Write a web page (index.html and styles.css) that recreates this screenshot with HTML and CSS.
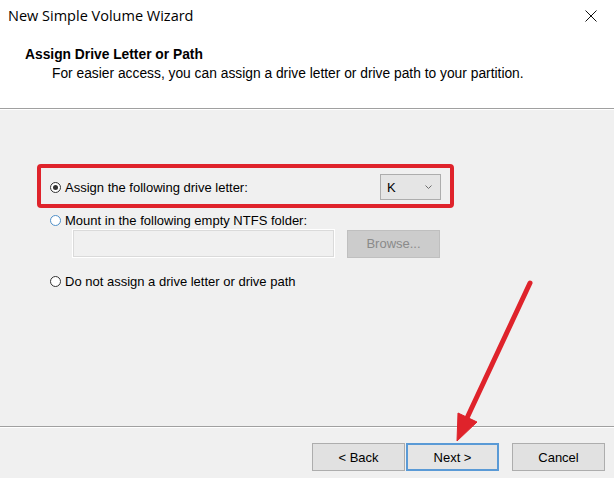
FILE: index.html
```html
<!DOCTYPE html>
<html lang="en">
<head>
    <meta charset="UTF-8">
    <title>New Simple Volume Wizard</title>
    <link rel="stylesheet" href="styles.css">
</head>
<body>
    <div class="window">
        <div class="top">
            <div class="titlebar">
                <span class="title">New Simple Volume Wizard</span>
                <span class="close">
                    <svg width="12" height="12" viewBox="0 0 12 12">
                        <path d="M0.5 0.5 L11.5 11.5 M11.5 0.5 L0.5 11.5" stroke="#111" stroke-width="1" fill="none"/>
                    </svg>
                </span>
            </div>
            <div class="header">
                <div class="heading">Assign Drive Letter or Path</div>
                <div class="subtitle">For easier access, you can assign a drive letter or drive path to your partition.</div>
            </div>
        </div>

        <div class="content">
            <div class="options">
                <div class="option first">
                    <span class="radio checked"></span>
                    <span class="label">Assign the following drive letter:</span>
                    <div class="select">
                        <span>K</span>
                        <svg width="7" height="4" viewBox="0 0 7 4">
                            <path d="M0.5 0.5 L3.5 3.5 L6.5 0.5" stroke="#6d6d6d" stroke-width="1" fill="none"/>
                        </svg>
                    </div>
                    <div class="highlight"></div>
                </div>

                <div class="option second">
                    <span class="radio hover"></span>
                    <span class="label">Mount in the following empty NTFS folder:</span>
                </div>
                <div class="folder-row">
                    <div class="textbox"></div>
                    <button class="btn disabled">Browse...</button>
                </div>

                <div class="option third">
                    <span class="radio"></span>
                    <span class="label">Do not assign a drive letter or drive path</span>
                </div>
            </div>
        </div>

        <div class="footer">
            <button class="btn">&lt; Back</button>
            <button class="btn default">Next &gt;</button>
            <button class="btn cancel">Cancel</button>
        </div>

        <!-- annotation arrow -->
        <svg class="arrow" width="614" height="478" viewBox="0 0 614 478">
            <line x1="530" y1="283" x2="467" y2="418" stroke="#df232b" stroke-width="5" stroke-linecap="round"/>
            <polygon points="457,441 458,413 477,422" fill="#df232b" stroke="#df232b" stroke-width="1" stroke-linejoin="round"/>
        </svg>
    </div>
</body>
</html>
```

FILE: styles.css
```css
* {
    margin: 0;
    padding: 0;
    box-sizing: border-box;
}

body {
    font-family: 'Liberation Sans', Arial, sans-serif;
    font-size: 13px;
    color: #000;
    background: #f0f0f0;
}

.window {
    position: relative;
    width: 614px;
    height: 478px;
    display: flex;
    flex-direction: column;
    overflow: hidden;
}

.top {
    background: #fff;
    height: 109px;
    border-bottom: 1px solid #a0a0a0;
    box-shadow: 0 1px 0 #fff;
}

.titlebar {
    height: 32px;
    display: flex;
    align-items: center;
    padding: 0 17px 2px 8px;
}

.title {
    font-family: 'Open Sans', 'Noto Sans', sans-serif;
    font-size: 14.5px;
    color: #000;
    flex: 1;
}

.close {
    display: flex;
    margin-top: 2px;
}

.header {
    padding-left: 25px;
    padding-top: 14px;
    font-size: 13.8px;
}

.heading {
    font-weight: bold;
    line-height: 17px;
}

.subtitle {
    padding-left: 27px;
    margin-top: 2px;
    line-height: 17px;
}

.content {
    flex: 1;
    padding: 0 0 0 50px;
}

.options {
    width: 391px;
    padding-top: 65px;
}

.option {
    position: relative;
    display: flex;
    align-items: center;
    height: 16px;
}

.option.first {
    height: 26px;
}

.option.second {
    margin-top: 12px;
}

.option.third {
    margin-top: 16px;
}

.radio {
    width: 11px;
    height: 11px;
    border: 1px solid #333;
    border-radius: 50%;
    background: #fff;
    margin-right: 4px;
    position: relative;
    flex-shrink: 0;
}

.radio.checked::after {
    content: '';
    position: absolute;
    left: 2px;
    top: 2px;
    width: 5px;
    height: 5px;
    border-radius: 50%;
    background: #333;
}

.radio.hover {
    border-color: #4f8fc8;
}

.label {
    flex: 1;
}

.select {
    width: 61px;
    height: 26px;
    background: #e5e5e5;
    border: 1px solid #adadad;
    display: flex;
    align-items: center;
    justify-content: space-between;
    padding: 0 8px 0 6px;
}

.highlight {
    position: absolute;
    left: -13px;
    right: -13px;
    top: -10px;
    bottom: -8px;
    border: 4px solid #df232b;
    border-radius: 4px;
    pointer-events: none;
}

.folder-row {
    display: flex;
    align-items: center;
    margin-top: 2px;
    padding-left: 23px;
    height: 27px;
}

.textbox {
    width: 261px;
    height: 27px;
    background: #f0f0f0;
    border: 1px solid #dadada;
    outline: 1px solid #fff;
}

.btn {
    font-family: 'Liberation Sans', Arial, sans-serif;
    font-size: 13px;
    color: #000;
    width: 93px;
    height: 28px;
    background: #e1e1e1;
    border: 1px solid #adadad;
}

.btn.disabled {
    margin-left: auto;
    margin-right: 1px;
    background: #cccccc;
    border-color: #bfbfbf;
    color: #8a8a8a;
}

.footer {
    height: 52px;
    border-top: 1px solid #a0a0a0;
    box-shadow: inset 0 1px 0 #fff;
    display: flex;
    justify-content: flex-end;
    padding: 16px 9px 0 0;
}

.btn.default {
    margin-left: 1px;
    border: 2px solid #5a9ad6;
    background: #e5e5e5;
}

.btn.cancel {
    margin-left: 13px;
}

.arrow {
    position: absolute;
    left: 0;
    top: 0;
    pointer-events: none;
}
```
